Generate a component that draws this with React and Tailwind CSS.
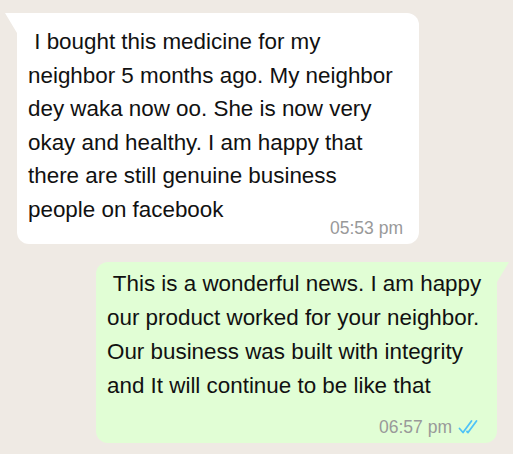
import React from 'react';

const DoubleCheck = () => (
  <svg width="24" height="16" viewBox="0 0 24 16" fill="none" stroke="#4fc3f7" strokeWidth="1.8" strokeLinecap="round" strokeLinejoin="round">
    <path d="M1.5 9.5 L5 13.5 L13.5 2" />
    <path d="M9 12.5 L10 13.5 L18.5 2" />
  </svg>
);

const Bubble = ({ side, lines, time, read }) => {
  const incoming = side === 'in';
  return (
    <div className={`relative rounded-[12px] px-[11px] pb-[7px] ${incoming ? 'w-[402px] bg-white rounded-tl-none self-start pt-[12px]' : 'w-[401px] bg-[#e1fed5] rounded-tr-none self-end pt-[5px]'}`}>
      {incoming ? (
        <svg className="absolute -left-[12px] top-0" width="12" height="20" viewBox="0 0 12 20">
          <path d="M12 0 L0 0 L12 20 Z" fill="#ffffff" />
        </svg>
      ) : (
        <svg className="absolute -right-[12px] top-0" width="12" height="20" viewBox="0 0 12 20">
          <path d="M0 0 L12 0 L0 20 Z" fill="#e1fed5" />
        </svg>
      )}
      <p className={`text-[22.4px] text-[#111] whitespace-pre ${incoming ? 'leading-[33.6px]' : 'leading-[34px]'}`}>
        {lines.map((l, i) => (
          <span key={i} className="block">{l}</span>
        ))}
      </p>
      <div className={`flex items-center justify-end gap-[6px] text-[17.5px] leading-[18px] text-[#999] ${incoming ? '-mt-[8px] pr-[5px]' : 'mt-[15px] pr-[4px]'}`}>
        <span>{time}</span>
        {read && <DoubleCheck />}
      </div>
    </div>
  );
};

export default function App() {
  return (
    <div className="w-[513px] h-[454px] bg-[#efeae4] overflow-hidden font-['Liberation_Sans',Arial,sans-serif]">
      <div className="flex flex-col gap-[18px] pt-[13px] pl-[17px] pr-[16px]">
        <Bubble
          side="in"
          lines={[
            ' I bought this medicine for my',
            'neighbor 5 months ago. My neighbor',
            'dey waka now oo. She is now very',
            'okay and healthy. I am happy that',
            'there are still genuine business',
            'people on facebook',
          ]}
          time="05:53 pm"
        />
        <Bubble
          side="out"
          lines={[
            ' This is a wonderful news. I am happy',
            'our product worked for your neighbor.',
            'Our business was built with integrity',
            'and It will continue to be like that',
          ]}
          time="06:57 pm"
          read
        />
      </div>
    </div>
  );
}
